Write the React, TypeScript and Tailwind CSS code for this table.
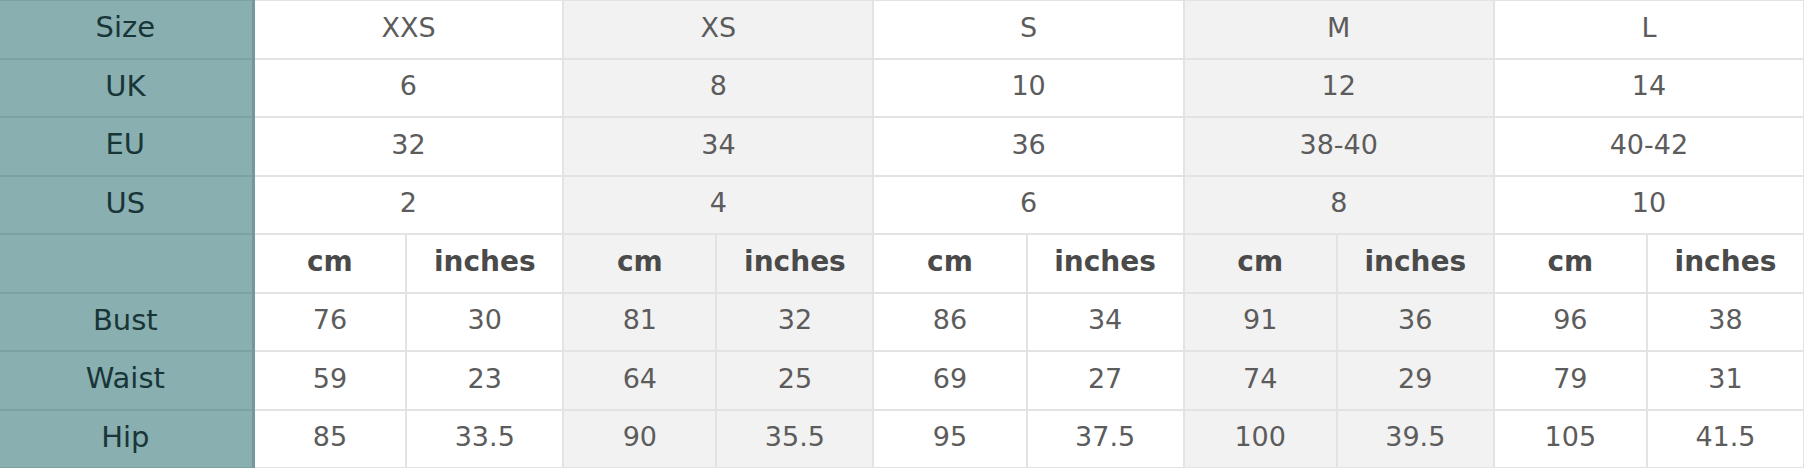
const sizes = [
  { name: 'XXS', uk: '6', eu: '32', us: '2', bust: ['76', '30'], waist: ['59', '23'], hip: ['85', '33.5'] },
  { name: 'XS', uk: '8', eu: '34', us: '4', bust: ['81', '32'], waist: ['64', '25'], hip: ['90', '35.5'] },
  { name: 'S', uk: '10', eu: '36', us: '6', bust: ['86', '34'], waist: ['69', '27'], hip: ['95', '37.5'] },
  { name: 'M', uk: '12', eu: '38-40', us: '8', bust: ['91', '36'], waist: ['74', '29'], hip: ['100', '39.5'] },
  { name: 'L', uk: '14', eu: '40-42', us: '10', bust: ['96', '38'], waist: ['79', '31'], hip: ['105', '41.5'] },
];

const head = 'bg-[#89afb1] text-[#183537] text-[29px] pb-[3px] border-y-2 border-r-[3px] border-y-[#7ba1a3] border-r-[#74999b] font-normal';
const cell = 'border-2 border-[#e3e3e3] text-center pb-[3px] font-normal';

function bg(i: number) {
  return i % 2 === 1 ? 'bg-[#f2f2f2]' : 'bg-white';
}

export default function App() {
  const wide: { label: string; key: 'name' | 'uk' | 'eu' | 'us' }[] = [
    { label: 'Size', key: 'name' },
    { label: 'UK', key: 'uk' },
    { label: 'EU', key: 'eu' },
    { label: 'US', key: 'us' },
  ];
  const measures: { label: string; key: 'bust' | 'waist' | 'hip' }[] = [
    { label: 'Bust', key: 'bust' },
    { label: 'Waist', key: 'waist' },
    { label: 'Hip', key: 'hip' },
  ];

  return (
    <div className="w-[1804px] h-[468px] overflow-hidden bg-white" style={{ fontFamily: '"DejaVu Sans", sans-serif' }}>
      <table className="w-[1806px] -ml-px -mt-px border-collapse table-fixed text-[27px] text-[#5c5c5c]">
        <colgroup>
          <col className="w-[254px]" />
          {sizes.map((s) => (
            <>
              <col key={s.name + 'a'} className="w-[153px]" />
              <col key={s.name + 'b'} className="w-[157px]" />
            </>
          ))}
        </colgroup>
        <tbody>
          {wide.map((r) => (
            <tr key={r.label} className="h-[58.5px]">
              <th className={head}>{r.label}</th>
              {sizes.map((s, i) => (
                <td key={s.name} colSpan={2} className={`${cell} ${bg(i)}`}>
                  {s[r.key]}
                </td>
              ))}
            </tr>
          ))}
          <tr className="h-[58.5px]">
            <th className={head}></th>
            {sizes.map((s, i) => (
              <>
                <td key={s.name + 'cm'} className={`${cell} ${bg(i)} text-[28px] !font-bold text-[#4a4a4a]`}>cm</td>
                <td key={s.name + 'in'} className={`${cell} ${bg(i)} text-[28px] !font-bold text-[#4a4a4a]`}>inches</td>
              </>
            ))}
          </tr>
          {measures.map((m) => (
            <tr key={m.label} className="h-[58.5px]">
              <th className={head}>{m.label}</th>
              {sizes.map((s, i) => (
                <>
                  <td key={s.name + m.key + '0'} className={`${cell} ${bg(i)}`}>{s[m.key][0]}</td>
                  <td key={s.name + m.key + '1'} className={`${cell} ${bg(i)}`}>{s[m.key][1]}</td>
                </>
              ))}
            </tr>
          ))}
        </tbody>
      </table>
    </div>
  );
}
